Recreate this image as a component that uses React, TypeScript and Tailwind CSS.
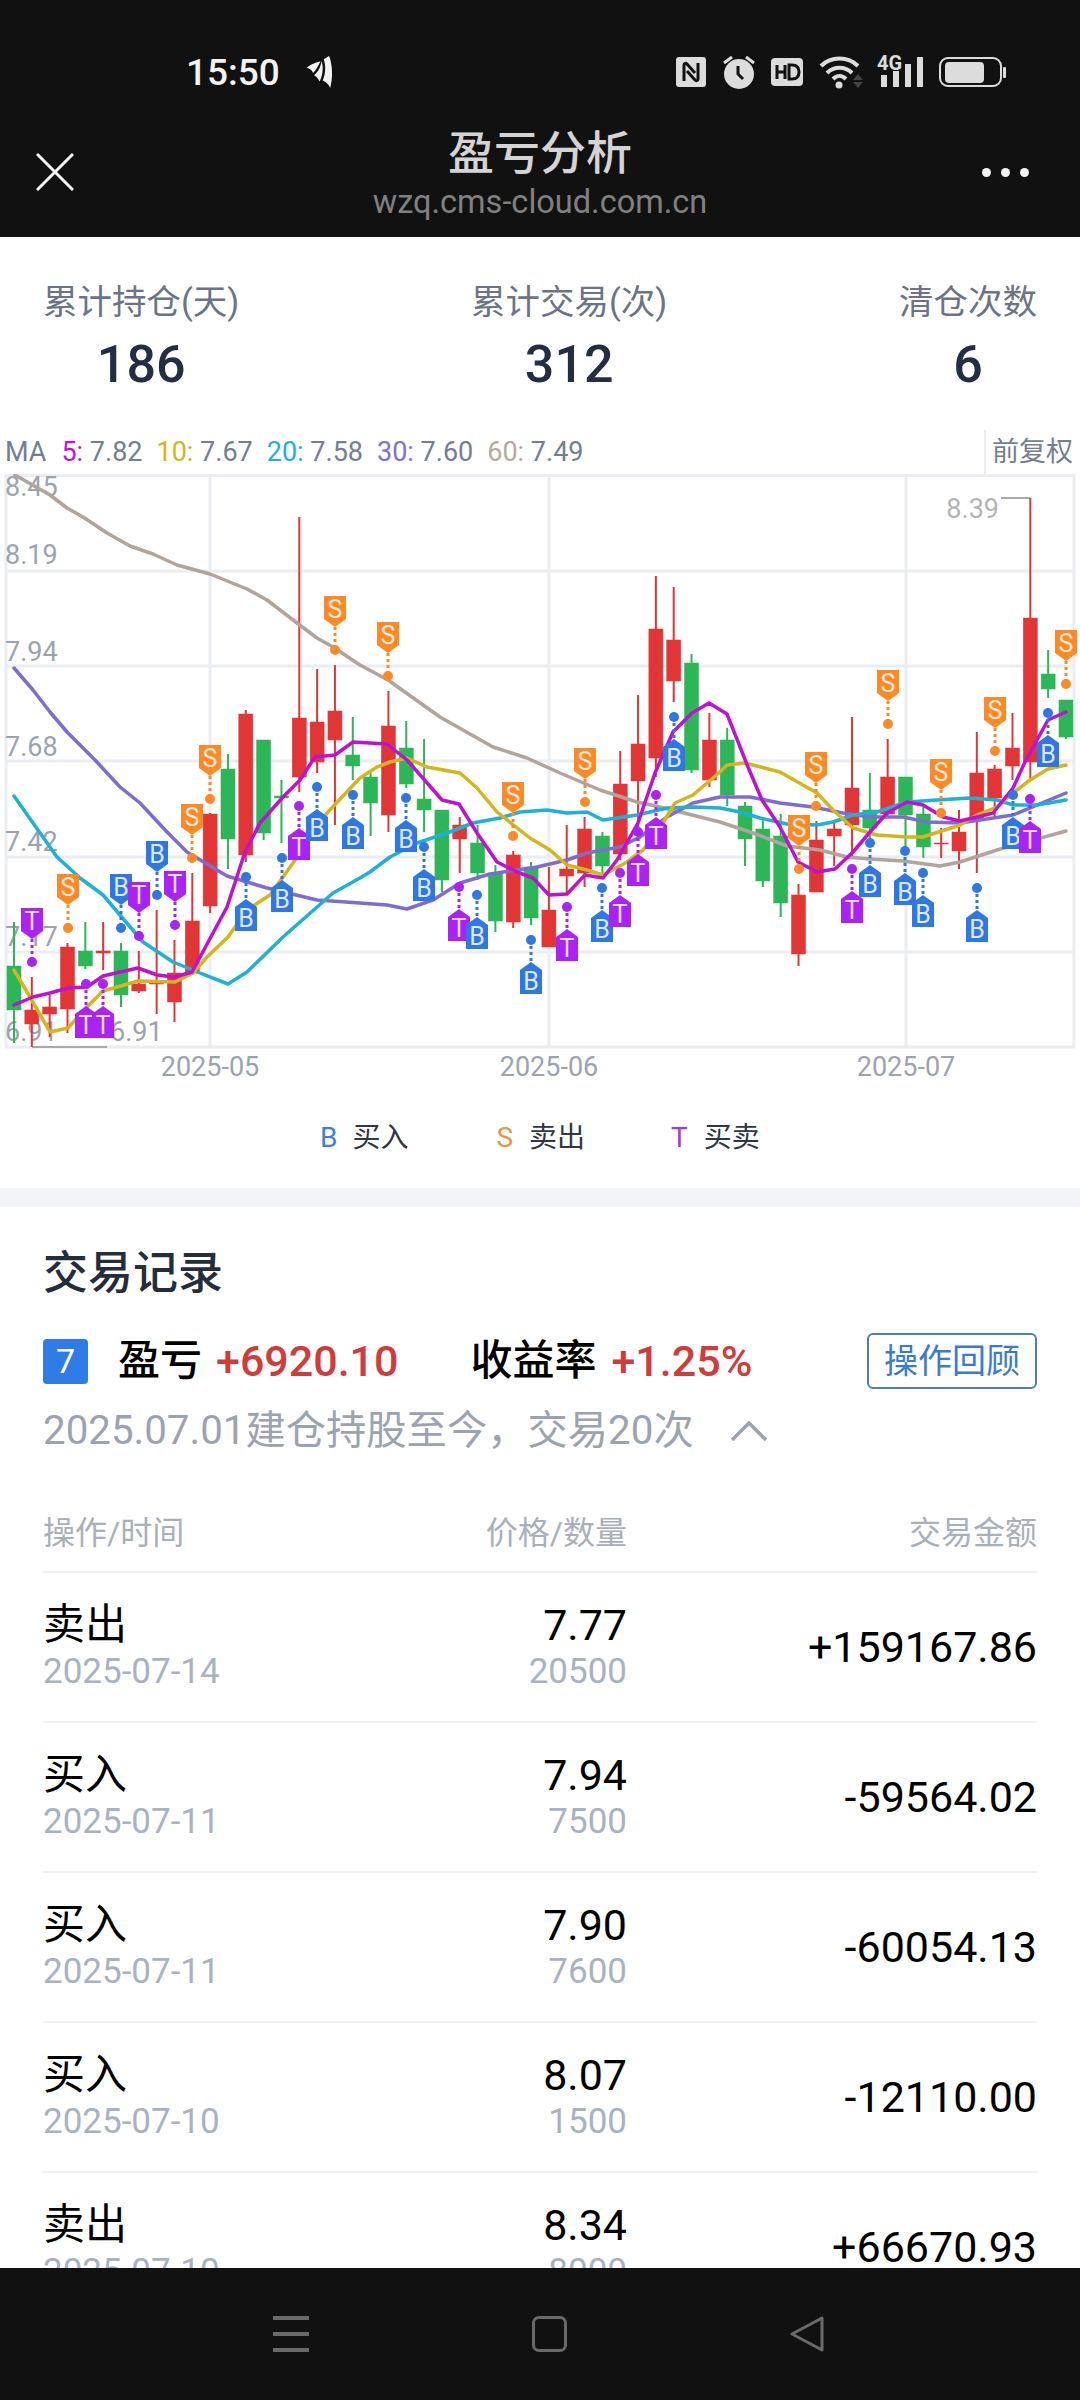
type Candle = ['r' | 'g', number, number, number, number];
type Marker = [number, 'B' | 'S' | 'T', number];

const UP = '#e23636';
const DOWN = '#2db658';

// high, body top, body bottom, low (pixel y)
const candles: Candle[] = [
  ['g', 922, 966, 1010, 1043], ['r', 977, 1010, 1024, 1047], ['r', 995, 1007, 1014, 1037], ['r', 943, 947, 1009, 1033],
  ['g', 922, 951, 966, 969], ['r', 922, 951, 953, 970], ['g', 943, 951, 995, 1007], ['r', 951, 984, 991, 993],
  ['r', 910, 983, 984, 1014], ['r', 940, 973, 1002, 1022], ['r', 873, 921, 973, 975], ['r', 813, 814, 906, 913],
  ['g', 754, 769, 839, 869], ['r', 710, 714, 855, 862], ['g', 740, 740, 833, 840], ['g', 780, 796, 798, 843],
  ['r', 517, 718, 777, 792], ['r', 669, 722, 762, 773], ['r', 665, 711, 740, 825], ['g', 717, 755, 766, 780],
  ['g', 773, 777, 803, 836], ['r', 691, 726, 815, 832], ['g', 721, 748, 784, 788], ['g', 739, 799, 810, 832],
  ['g', 810, 810, 880, 892], ['r', 817, 825, 839, 873], ['g', 825, 843, 873, 880], ['g', 865, 873, 921, 932],
  ['r', 851, 855, 922, 928], ['g', 862, 867, 918, 925], ['r', 867, 910, 947, 947], ['r', 825, 869, 876, 893],
  ['r', 817, 829, 873, 887], ['g', 832, 836, 866, 875], ['r', 751, 784, 854, 860], ['r', 695, 744, 781, 827],
  ['r', 576, 629, 758, 777], ['r', 587, 640, 681, 702], ['g', 654, 663, 770, 773], ['r', 713, 740, 780, 787],
  ['g', 728, 740, 795, 806], ['g', 802, 806, 839, 866], ['g', 820, 829, 881, 887], ['g', 814, 836, 903, 917],
  ['r', 884, 895, 954, 966], ['r', 821, 840, 892, 892], ['r', 823, 829, 836, 866], ['r', 717, 788, 825, 858],
  ['g', 773, 810, 828, 840], ['r', 739, 777, 814, 817], ['g', 777, 777, 815, 847], ['g', 807, 814, 847, 858],
  ['r', 828, 843, 844, 858], ['r', 810, 832, 851, 869], ['r', 732, 773, 820, 873], ['r', 765, 769, 798, 817],
  ['r', 713, 748, 766, 780], ['r', 498, 618, 762, 780], ['g', 650, 674, 689, 698], ['g', 700, 700, 737, 739],
];

const ma60 = '15,475 50,495 67,508 83,517 107,533 130,546 153,554 177,565 210,574 247,589 267,600 297,623 317,638 333,647 360,665 388,680 440,717 493,747 527,758 560,773 600,790 637,802 660,807 720,822 753,833 787,846 820,850 847,857 870,859 903,861 940,866 960,862 997,850 1066,831';
const ma30 = '14,668 33,690 50,712 67,732 95,760 120,787 140,803 167,832 187,852 227,876 267,888 317,900 360,903 387,905 407,909 433,900 460,883 490,874 537,867 567,860 587,853 620,847 640,837 667,817 693,803 720,797 750,797 780,803 813,807 843,813 870,817 903,817 927,822 960,823 1013,815 1066,793';
const ma20 = '14,796 33,823 57,857 80,878 103,895 120,915 143,942 173,962 200,973 228,984 247,972 283,937 333,893 360,878 370,872 390,857 417,843 447,833 473,823 500,818 520,812 547,810 567,813 587,812 603,820 637,815 667,808 693,807 720,808 740,812 760,818 787,824 817,825 833,822 853,815 877,812 907,802 937,800 970,798 997,800 1013,805 1037,805 1066,800';
const ma10 = '14,970 30,997 50,1032 68,1028 87,1007 103,991 138,981 175,982 193,973 207,957 228,937 247,910 270,895 293,863 327,813 360,778 377,767 390,762 407,758 427,767 460,773 477,788 497,812 530,838 550,850 567,865 587,870 603,875 627,862 643,850 663,823 675,803 693,795 720,772 727,765 745,763 780,772 817,793 833,810 853,828 877,835 907,837 923,837 960,825 977,815 997,807 1013,793 1030,780 1048,769 1066,765';
const ma5 = '14,1005 33,997 50,993 68,988 87,987 103,976 138,968 157,975 175,977 192,972 227,907 245,852 260,823 283,797 300,780 315,757 335,755 353,742 387,744 407,760 442,800 459,804 477,833 497,862 517,872 533,878 549,895 567,894 585,875 603,878 617,860 638,823 655,773 673,732 692,713 709,703 727,714 748,767 762,800 780,827 798,862 817,872 835,869 853,852 870,832 887,813 907,802 923,805 943,817 960,821 977,817 993,813 1013,788 1025,762 1037,740 1048,720 1066,712';

// candle x, letter, dot y. The tag goes above the dot for S and for the T/B given in `above`
const above: Marker[] = [
  [32, 'T', 962], [68, 'S', 928], [121, 'B', 928], [139, 'T', 936], [157, 'B', 895], [175, 'T', 925], [192, 'S', 858], [210, 'S', 799],
  [335, 'S', 650], [388, 'S', 676], [513, 'S', 836], [585, 'S', 802], [799, 'S', 869], [816, 'S', 806], [888, 'S', 724], [941, 'S', 813],
  [995, 'S', 751], [1066, 'S', 684],
];
const below: Marker[] = [
  [86, 'T', 984], [103, 'T', 984], [246, 'B', 877], [282, 'B', 858], [299, 'T', 806], [317, 'B', 787], [353, 'B', 795], [406, 'B', 798],
  [424, 'B', 847], [459, 'T', 887], [477, 'B', 895], [531, 'B', 940], [567, 'T', 907], [602, 'B', 888], [620, 'T', 873], [638, 'T', 832],
  [656, 'T', 795], [674, 'B', 717], [852, 'T', 869], [870, 'B', 843], [905, 'B', 851], [923, 'B', 873], [977, 'B', 888], [1013, 'B', 795],
  [1030, 'T', 799], [1048, 'B', 713],
];
const markerColor = { B: '#2f78e4', S: '#ff8a25', T: '#aa22f4' };

const maLegend = [
  { label: '5:', value: '7.82', color: 'text-[#c414d2]' },
  { label: '10:', value: '7.67', color: 'text-[#d4b51c]' },
  { label: '20:', value: '7.58', color: 'text-[#1fb0dc]' },
  { label: '30:', value: '7.60', color: 'text-[#7f6fd2]' },
  { label: '60:', value: '7.49', color: 'text-[#b5aaa2]' },
];

const records = [
  { op: '卖出', date: '2025-07-14', price: '7.77', qty: '20500', amount: '+159167.86' },
  { op: '买入', date: '2025-07-11', price: '7.94', qty: '7500', amount: '-59564.02' },
  { op: '买入', date: '2025-07-11', price: '7.90', qty: '7600', amount: '-60054.13' },
  { op: '买入', date: '2025-07-10', price: '8.07', qty: '1500', amount: '-12110.00' },
  { op: '卖出', date: '2025-07-10', price: '8.34', qty: '8000', amount: '+66670.93' },
];

function StatusIcons() {
  return (
    <div className="flex items-center text-[#dcdcdc]">
      <svg width="30" height="30" viewBox="0 0 30 30">
        <rect width="30" height="30" rx="3" fill="currentColor" />
        <path d="M8 24V8c0-2 2-2 3-1l8 9M22 6v16c0 2-2 2-3 1l-8-9" fill="none" stroke="#111" strokeWidth="3" />
      </svg>
      <svg className="ml-[17px]" width="32" height="34" viewBox="0 0 32 34">
        <circle cx="16" cy="19" r="15" fill="currentColor" />
        <path d="M15 11v8l5 5" fill="none" stroke="#111" strokeWidth="3" />
        <path d="M1 8l8-6M31 8l-8-6" stroke="currentColor" strokeWidth="3" />
      </svg>
      <svg className="ml-[16px]" width="32" height="28" viewBox="0 0 32 28">
        <rect width="32" height="28" rx="4" fill="currentColor" />
        <path d="M6 7v14M14 7v14M6 14h8M18 7v14h3c5 0 7-3 7-7s-2-7-7-7z" fill="none" stroke="#111" strokeWidth="3" />
      </svg>
      <svg className="ml-[16px]" width="44" height="34" viewBox="0 0 44 34">
        <path d="M2 11C12 1 29 1 39 11M8 18c7-7 18-7 25 0M14 24c4-4 9-4 13 0" fill="none" stroke="currentColor" strokeWidth="4" />
        <circle cx="20" cy="30" r="3.5" fill="currentColor" />
        <path d="M39 19l5 6H34zM34 27h10l-5 6z" fill="#444" />
      </svg>
      <div className="ml-[14px] relative w-[46px] h-[32px]">
        <span className="absolute left-0 top-[-2px] text-[20px] font-bold leading-[18px]">4G</span>
        <svg width="46" height="32" viewBox="0 0 46 32">
          <path d="M4 19h6v12H4zM16 15h6v16h-6zM28 8h6v23h-6zM40 1h6v30h-6z" fill="currentColor" />
        </svg>
      </div>
      <svg className="ml-[16px]" width="67" height="30" viewBox="0 0 67 30">
        <rect x="1" y="1" width="61" height="28" rx="8" fill="none" stroke="currentColor" strokeWidth="2" />
        <rect x="6" y="5" width="39" height="21" rx="4" fill="currentColor" />
        <rect x="64" y="10" width="3" height="11" rx="1" fill="currentColor" />
      </svg>
    </div>
  );
}

function KLine() {
  const hGrid = [571, 666, 761, 857, 952];
  const vGrid = [210, 549, 906];
  const yLabels: [string, number][] = [['8.45', 487], ['8.19', 555], ['7.94', 652], ['7.68', 747], ['7.42', 842], ['7.17', 937], ['6.91', 1032]];
  const xLabels: [string, number][] = [['2025-05', 210], ['2025-06', 549], ['2025-07', 906]];
  const lines: [string, string][] = [[ma60, '#b0a49c'], [ma30, '#7f6bd2'], [ma20, '#1fb0d8'], [ma10, '#d4b51c'], [ma5, '#c010d2']];

  return (
    <svg className="block" width="1080" height="636" viewBox="0 474 1080 636">
      <rect x="6" y="475.5" width="1068" height="571.5" fill="#fff" stroke="#ecedf3" strokeWidth="3" />
      {hGrid.map(y => <line key={y} x1="6" x2="1074" y1={y} y2={y} stroke="#ecedf3" strokeWidth="3" />)}
      {vGrid.map(x => <line key={x} x1={x} x2={x} y1="475" y2="1047" stroke="#ecedf3" strokeWidth="3" />)}

      <g fontSize="27" fill="#9ca3af" dominantBaseline="central">
        {yLabels.map(([t, y]) => <text key={t} x="5" y={y}>{t}</text>)}
      </g>
      <g fontSize="27" fill="#9ca3af" textAnchor="middle" dominantBaseline="central">
        {xLabels.map(([t, x]) => <text key={t} x={x} y="1067">{t}</text>)}
      </g>
      <text x="999" y="509" fontSize="27" fill="#b4b4b4" textAnchor="end" dominantBaseline="central">8.39</text>
      <path d="M1001 498h29" stroke="#aaa" strokeWidth="2" fill="none" />
      <text x="110" y="1032" fontSize="27" fill="#9ca3af" dominantBaseline="central">6.91</text>
      <path d="M32 1047h75" stroke="#aaa" strokeWidth="2" fill="none" />

      {candles.map(([c, high, top, bottom, low], i) => {
        const x = 14 + 17.83 * i;
        const color = c === 'r' ? UP : DOWN;
        return (
          <g key={i} fill={color} stroke={color}>
            <line x1={x} x2={x} y1={high} y2={low} strokeWidth="2" />
            <rect x={x - 7} y={top} width="14" height={Math.max(bottom - top, 1)} strokeWidth="0.5" />
          </g>
        );
      })}

      {lines.map(([pts, color]) => (
        <polyline key={color} points={pts} fill="none" stroke={color} strokeWidth="3.5" strokeLinejoin="round" strokeLinecap="round" />
      ))}

      {above.map(([x, k, y]) => {
        const tip = y - 23;
        return (
          <g key={`a${x}`} fill={markerColor[k]}>
            <line x1={x} x2={x} y1={tip} y2={y} stroke={markerColor[k]} strokeWidth="3" strokeDasharray="3 3" />
            <circle cx={x} cy={y} r="5" />
            <path d={`M${x - 11} ${tip - 31}h22v23l-11 8l-11 -8z`} />
            <text x={x} y={tip - 18} fontSize="25" fill="#fff" fillOpacity="0.85" textAnchor="middle" dominantBaseline="central">{k}</text>
          </g>
        );
      })}
      {below.map(([x, k, y]) => {
        const tip = y + 22;
        return (
          <g key={`b${x}`} fill={markerColor[k]}>
            <line x1={x} x2={x} y1={y} y2={tip} stroke={markerColor[k]} strokeWidth="3" strokeDasharray="3 3" />
            <circle cx={x} cy={y} r="5" />
            <path d={`M${x} ${tip}l11 8v24h-22v-24z`} />
            <text x={x} y={tip + 19} fontSize="25" fill="#fff" fillOpacity="0.85" textAnchor="middle" dominantBaseline="central">{k}</text>
          </g>
        );
      })}
    </svg>
  );
}

export default function App() {
  return (
    <div className="flex flex-col w-[1080px] h-[2400px] overflow-hidden bg-white font-[family-name:Roboto,'Noto_Sans_CJK_SC',sans-serif]">
      <header className="h-[237px] shrink-0 bg-[#111] pt-[54px]">
        <div className="flex items-center justify-between h-[36px] pl-[186px] pr-[74px]">
          <div className="flex items-center">
            <span className="text-[37px] leading-none font-medium text-[#f2f2f2]">15:50</span>
            <svg className="ml-[26px]" width="28" height="32" viewBox="0 0 25 30" fill="#f2f2f2">
              <path d="M0 11C5 7 10 6 13 5C11 9 9 13 6 16C5 13 3 12 0 11Z" />
              <path d="M14 5C13 10 11 15 7 18C9 19 11 21 12 24C15 19 16 11 14 5Z" />
              <path d="M16 3L21 0C24 7 25 20 22 30C21 27 18 24 15 23C18 16 18 9 16 3Z" />
            </svg>
          </div>
          <StatusIcons />
        </div>
        <div className="grid grid-cols-[1fr_auto_1fr] items-center mt-[33px]">
          <svg className="ml-[36px]" width="38" height="38" viewBox="0 0 38 38">
            <path d="M1 1l36 36M37 1L1 37" stroke="#f2f2f2" strokeWidth="3" />
          </svg>
          <div className="flex flex-col items-center">
            <div className="text-[46px] leading-[60px] font-medium text-[#d4d4d4]">盈亏分析</div>
            <div className="text-[32.5px] leading-[38px] text-[#808080]">wzq.cms-cloud.com.cn</div>
          </div>
          <div className="flex justify-end gap-[10px] pr-[51px]">
            <span className="w-[9px] h-[9px] rounded-full bg-[#f2f2f2]" />
            <span className="w-[9px] h-[9px] rounded-full bg-[#f2f2f2]" />
            <span className="w-[9px] h-[9px] rounded-full bg-[#f2f2f2]" />
          </div>
        </div>
      </header>

      <main className="flex-1 overflow-hidden">
        <section className="flex justify-between h-[193px] px-[43px] pt-[42px]">
          {[['累计持仓(天)', '186'], ['累计交易(次)', '312'], ['清仓次数', '6']].map(([label, value]) => (
            <div key={label} className="flex flex-col items-center">
              <div className="text-[34.5px] leading-[46px] text-[#6b7385]">{label}</div>
              <div className="mt-[9px] text-[52px] leading-[62px] font-medium text-[#252d42]">{value}</div>
            </div>
          ))}
        </section>

        <div className="flex items-center justify-between h-[44px] pl-[5px] pr-[7px] text-[27px] text-[#747e8f]">
          <div className="flex items-center">
            <span>MA</span>
            <div className="flex gap-[14px] ml-[15px]">
              {maLegend.map(m => (
                <span key={m.label}>
                  <span className={m.color}>{m.label}</span> {m.value}
                </span>
              ))}
            </div>
          </div>
          <span className="h-full pl-[6px] border-l-2 border-[#ecedf3] leading-[44px]">前复权</span>
        </div>

        <KLine />

        <div className="flex items-center h-[56px] pl-[320px] text-[28px] text-[#2f3644]">
          <span className="text-[#3f7fd8]">B</span>
          <span className="ml-[15px]">买入</span>
          <span className="ml-[88px] text-[#e8934a]">S</span>
          <span className="ml-[16px]">卖出</span>
          <span className="ml-[86px] text-[#a83ad8]">T</span>
          <span className="ml-[16px]">买卖</span>
        </div>
        <div className="h-[22px]" />
        <div className="h-[19px] bg-[#f3f4f8]" />

        <section className="px-[43px]">
          <h2 className="mt-[37px] text-[45px] leading-[60px] font-medium text-[#252d3a]">交易记录</h2>

          <div className="flex items-center justify-between mt-[29px] h-[56px]">
            <div className="flex items-center text-[42px] leading-none">
              <span className="flex items-center justify-center w-[45px] h-[45px] rounded-[4px] bg-[#2f7be8] text-[34px] text-white">7</span>
              <span className="ml-[30px] font-medium text-black">盈亏</span>
              <span className="ml-[14px] text-[43px] font-medium text-[#d33a3a]">+6920.10</span>
              <span className="ml-[72px] font-medium text-black">收益率</span>
              <span className="ml-[15px] text-[43px] font-medium text-[#d33a3a]">+1.25%</span>
            </div>
            <button className="w-[170px] h-[56px] rounded-[6px] border-2 border-[#4a7fb8] text-[34px] text-[#3a7bd0]">操作回顾</button>
          </div>

          <div className="flex items-center mt-[14px] h-[56px] text-[40.3px] text-[#9ca3af]">
            <span>2025.07.01建仓持股至今，交易20次</span>
            <svg className="ml-[36px]" width="38" height="20" viewBox="0 0 38 20">
              <path d="M2 19L19 2l17 17" fill="none" stroke="#9ca3af" strokeWidth="3.5" />
            </svg>
          </div>

          <div className="flex items-start mt-[46px] h-[68px] border-b-2 border-[#eef0f3] text-[32px] leading-[56px] text-[#a9afbb]">
            <span className="w-[400px]">操作/时间</span>
            <span className="w-[184px] text-right">价格/数量</span>
            <span className="flex-1 text-right">交易金额</span>
          </div>

          {records.map((r, i) => (
            <div key={i} className="flex items-center h-[150px] border-b-2 border-[#f1f2f5]">
              <div className="w-[400px]">
                <div className="text-[42px] leading-[50px] text-black">{r.op}</div>
                <div className="text-[35px] leading-[44px] text-[#aab2c2]">{r.date}</div>
              </div>
              <div className="w-[184px] text-right">
                <div className="text-[43px] leading-[50px] text-black">{r.price}</div>
                <div className="text-[35px] leading-[44px] text-[#aab2c2]">{r.qty}</div>
              </div>
              <div className="flex-1 text-right text-[43px] text-black">{r.amount}</div>
            </div>
          ))}
        </section>
      </main>

      <nav className="flex items-center justify-between shrink-0 h-[132px] bg-[#111] pl-[273px] pr-[256px]">
        <div className="flex flex-col gap-[12px]">
          <span className="block w-[36px] h-[4px] bg-[#6a6a6a]" />
          <span className="block w-[36px] h-[4px] bg-[#6a6a6a]" />
          <span className="block w-[36px] h-[4px] bg-[#6a6a6a]" />
        </div>
        <span className="block w-[35px] h-[36px] rounded-[7px] border-[3px] border-[#6a6a6a]" />
        <svg width="34" height="36" viewBox="0 0 34 36">
          <path d="M32 2v32L2 18z" fill="none" stroke="#6a6a6a" strokeWidth="3" strokeLinejoin="round" />
        </svg>
      </nav>
    </div>
  );
}
